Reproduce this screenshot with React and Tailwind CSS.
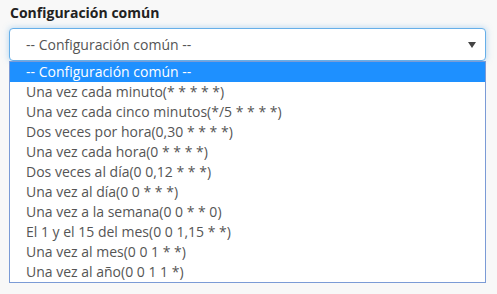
export default function App() {
  const options = [
    "-- Configuración común --",
    "Una vez cada minuto(* * * * *)",
    "Una vez cada cinco minutos(*/5 * * * *)",
    "Dos veces por hora(0,30 * * * *)",
    "Una vez cada hora(0 * * * *)",
    "Dos veces al día(0 0,12 * * *)",
    "Una vez al día(0 0 * * *)",
    "Una vez a la semana(0 0 * * 0)",
    "El 1 y el 15 del mes(0 0 1,15 * *)",
    "Una vez al mes(0 0 1 * *)",
    "Una vez al año(0 0 1 1 *)",
  ];
  return (
    <div
      className="w-[497px] h-[294px] bg-[#f8f8f8] overflow-hidden pl-[9px] pr-[11px] pt-[3px]"
      style={{ fontFamily: '"Open Sans", sans-serif' }}
    >
      <div className="pl-[1px] text-[14px] font-bold text-[#222] leading-[20px] h-[25px]">
        Configuración común
      </div>
      <div className="h-[33px] rounded-[4px] border border-[#66afe9] bg-white shadow-[0_0_6px_rgba(102,175,233,0.5)] flex items-center pl-[16px] pr-[9px]">
        <span className="flex-1 text-[14px] text-[#555] leading-[20px]">-- Configuración común --</span>
        <svg width="8" height="6" viewBox="0 0 8 6" className="mt-[1px]">
          <path d="M0 0 L8 0 L4 6 Z" fill="#444" />
        </svg>
      </div>
      <div className="border border-[#7b9bd6] bg-white">
        {options.map((o, i) => (
          <div
            key={i}
            className={
              "h-[20px] flex items-center pl-[16px] text-[14px] leading-[20px] " +
              (i === 0 ? "bg-[#1e90ff] text-white" : "text-[#555]")
            }
          >
            {o}
          </div>
        ))}
      </div>
    </div>
  );
}
